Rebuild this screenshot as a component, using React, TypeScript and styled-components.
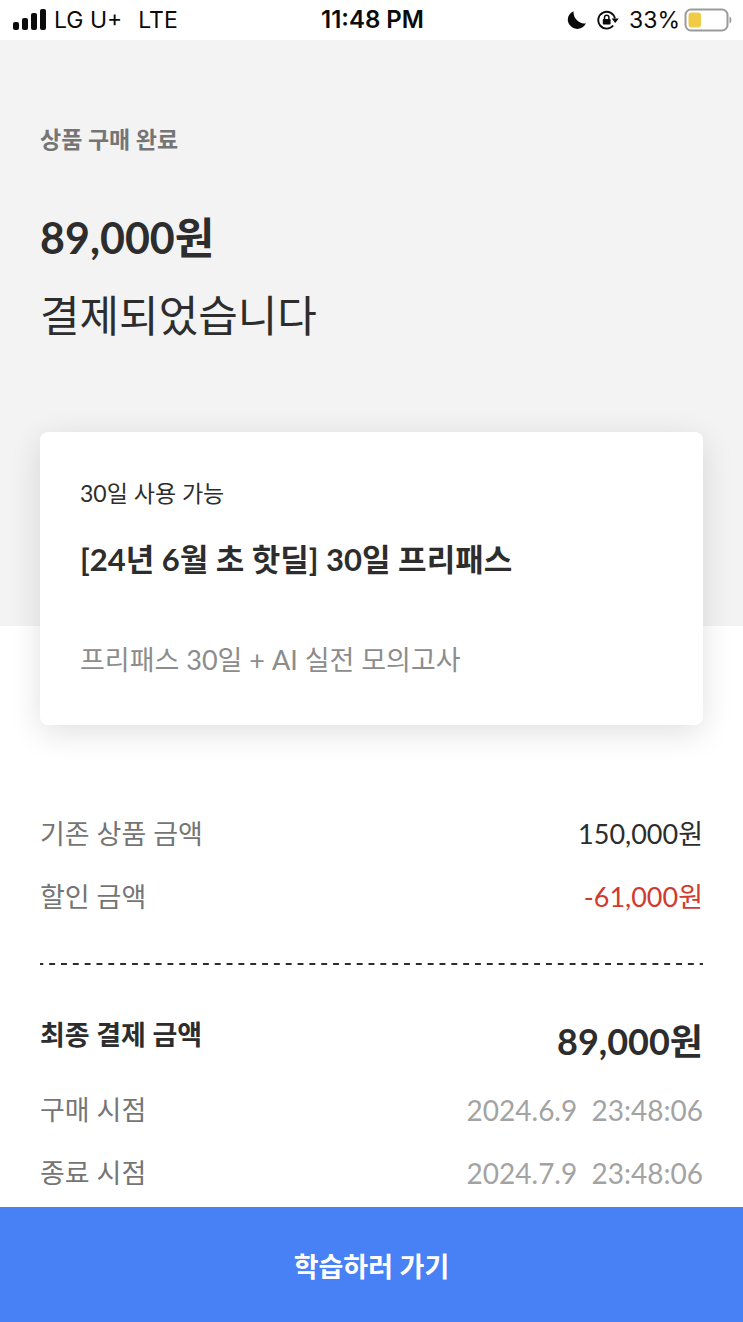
import React from "react";
import styled, { createGlobalStyle } from "styled-components";

const GlobalStyle = createGlobalStyle`
  *, *::before, *::after { box-sizing: border-box; }
  body {
    margin: 0;
    background: #fff;
    color: #2d2d2d;
    font-family: Lato, "Noto Sans CJK KR", sans-serif;
  }
  h1, h2, p, dl, dt, dd { margin: 0; font-weight: 400; }
`;

const Page = styled.div`
  display: flex;
  flex-direction: column;
  min-height: 100vh;
`;

const StatusBar = styled.header`
  display: grid;
  grid-template-columns: 1fr auto 1fr;
  align-items: center;
  height: 40px;
  padding: 0 11px 0 13px;
  background: #fff;
  color: #0b0b0b;
  font: 400 23px/40px Inter, sans-serif;
`;

const StatusGroup = styled.div<{ $end?: boolean }>`
  display: flex;
  align-items: center;
  justify-content: ${(p) => (p.$end ? "flex-end" : "flex-start")};
  gap: ${(p) => (p.$end ? 10 : 8)}px;
`;

const Network = styled.span`
  margin-left: 8px;
`;

const Clock = styled.time`
  font-size: 24px;
  font-weight: 600;
`;

const BatteryInfo = styled.span`
  display: flex;
  align-items: center;
  gap: 4px;
`;

const Hero = styled.section`
  padding: 81px 40px 0;
  background: #f3f3f3;
`;

const Status = styled.p`
  margin-bottom: 42px;
  color: #757575;
  font-size: 23px;
  font-weight: 700;
  line-height: 36px;
`;

const Headline = styled.h1`
  display: flex;
  flex-direction: column;
  font-size: 43px;
  line-height: 78px;
`;

const Card = styled.article`
  margin: 77px 0 -99px;
  padding: 41px 40px 45px;
  border-radius: 8px;
  background: #fff;
  box-shadow: 0 8px 32px rgba(0, 0, 0, 0.12);
`;

const Period = styled.p`
  font-size: 23px;
  line-height: 40px;
`;

const ProductName = styled.h2`
  margin: 22px 0 57px;
  font-size: 31px;
  font-weight: 700;
  line-height: 48px;
`;

const Description = styled.p`
  color: #8c8c8c;
  font-size: 27px;
  line-height: 40px;
`;

const Summary = styled.section`
  flex: 1;
  padding: 188px 40px 13px;
`;

const RowList = styled.dl`
  display: flex;
  flex-direction: column;
  gap: 23px;
`;

const Row = styled.div`
  display: flex;
  justify-content: space-between;
  align-items: flex-start;
  font-size: 27px;
  line-height: 40px;
`;

const Label = styled.dt<{ $strong?: boolean }>`
  color: ${(p) => (p.$strong ? "#2d2d2d" : "#757575")};
  font-weight: ${(p) => (p.$strong ? 700 : 400)};
`;

const tones = { normal: "#2d2d2d", discount: "#d03a2f" };

const Price = styled.dd<{ $tone?: keyof typeof tones }>`
  color: ${(p) => tones[p.$tone ?? "normal"]};
`;

const Moment = styled.dd`
  color: #a3a3a3;
  font-size: 28px;
  white-space: pre;
`;

const Total = styled.dd`
  font-size: 36px;
  font-weight: 700;
  line-height: 52px;
`;

const Divider = styled.hr`
  height: 2px;
  margin: 46px 0 50px;
  border: 0;
  background: linear-gradient(90deg, transparent 3px, #2d2d2d 3px 9px, transparent 9px) center / calc(100% / 56) 2px
    repeat-x;
`;

const StartButton = styled.button`
  position: sticky;
  bottom: 0;
  width: 100%;
  height: 115px;
  padding: 4px 0 0;
  border: 0;
  background: #4880f5;
  color: #fff;
  font: 700 27px/40px Lato, "Noto Sans CJK KR", sans-serif;
  cursor: pointer;
`;

const SignalIcon = () => (
  <svg width="33" height="22" viewBox="0 0 33 22" fill="#0b0b0b" aria-hidden="true">
    <rect x="0" y="13" width="6" height="8" rx="2" />
    <rect x="9" y="9" width="6" height="12" rx="2" />
    <rect x="18" y="4" width="6" height="17" rx="2" />
    <rect x="27" y="0" width="6" height="21" rx="2" />
  </svg>
);

const MoonIcon = () => (
  <svg width="20" height="20" viewBox="0 0 20 20" fill="#0b0b0b" aria-hidden="true">
    <path d="M6.600 1.300C1 3.600-.8 9.800 2.300 14.600 6.300 20.600 15.600 20.400 19 13.300 15.600 14 12.400 12.800 10 10.300 7.500 7.700 6.200 4.700 6.600 1.300Z" />
  </svg>
);

const RotationLockIcon = () => (
  <svg width="22" height="20" viewBox="0 0 22 20" fill="none" stroke="#0b0b0b" aria-hidden="true">
    <path d="M17.900 8.500A8.400 8.400 0 1 0 16.200 15.500" strokeWidth="1.900" />
    <path d="M14.600 8.400H21.800L18.200 13Z" fill="#0b0b0b" stroke="none" />
    <rect x="5.800" y="9" width="7.800" height="5.600" rx=".8" fill="#0b0b0b" stroke="none" />
    <path d="M7.500 9V7.400a2.200 2.200 0 0 1 4.400 0V9" strokeWidth="1.500" />
  </svg>
);

const BatteryIcon = () => (
  <svg width="48" height="24" viewBox="0 0 48 24" fill="none" aria-hidden="true">
    <rect x="1.500" y="1.500" width="42" height="21" rx="5.500" stroke="#9a9a9a" strokeWidth="2" />
    <rect x="4.500" y="4.500" width="12.500" height="15" rx="3" fill="#f0cb45" />
    <path d="M45.500 8.500c2.600 1 2.600 6 0 7Z" fill="#9a9a9a" />
  </svg>
);

export default function App() {
  return (
    <Page>
      <GlobalStyle />
      <StatusBar>
        <StatusGroup>
          <SignalIcon />
          <span>LG U+</span>
          <Network>LTE</Network>
        </StatusGroup>
        <Clock>11:48 PM</Clock>
        <StatusGroup $end>
          <MoonIcon />
          <RotationLockIcon />
          <BatteryInfo>
            33%
            <BatteryIcon />
          </BatteryInfo>
        </StatusGroup>
      </StatusBar>

      <Hero>
        <Status>상품 구매 완료</Status>
        <Headline>
          <strong>89,000원</strong>
          <span>결제되었습니다</span>
        </Headline>
        <Card>
          <Period>30일 사용 가능</Period>
          <ProductName>[24년 6월 초 핫딜] 30일 프리패스</ProductName>
          <Description>프리패스 30일 + AI 실전 모의고사</Description>
        </Card>
      </Hero>

      <Summary>
        <RowList>
          <Row>
            <Label>기존 상품 금액</Label>
            <Price>150,000원</Price>
          </Row>
          <Row>
            <Label>할인 금액</Label>
            <Price $tone="discount">-61,000원</Price>
          </Row>
        </RowList>
        <Divider />
        <RowList>
          <Row>
            <Label $strong>최종 결제 금액</Label>
            <Total>89,000원</Total>
          </Row>
          <Row>
            <Label>구매 시점</Label>
            <Moment>2024.6.9  23:48:06</Moment>
          </Row>
          <Row>
            <Label>종료 시점</Label>
            <Moment>2024.7.9  23:48:06</Moment>
          </Row>
        </RowList>
      </Summary>

      <StartButton type="button">학습하러 가기</StartButton>
    </Page>
  );
}
